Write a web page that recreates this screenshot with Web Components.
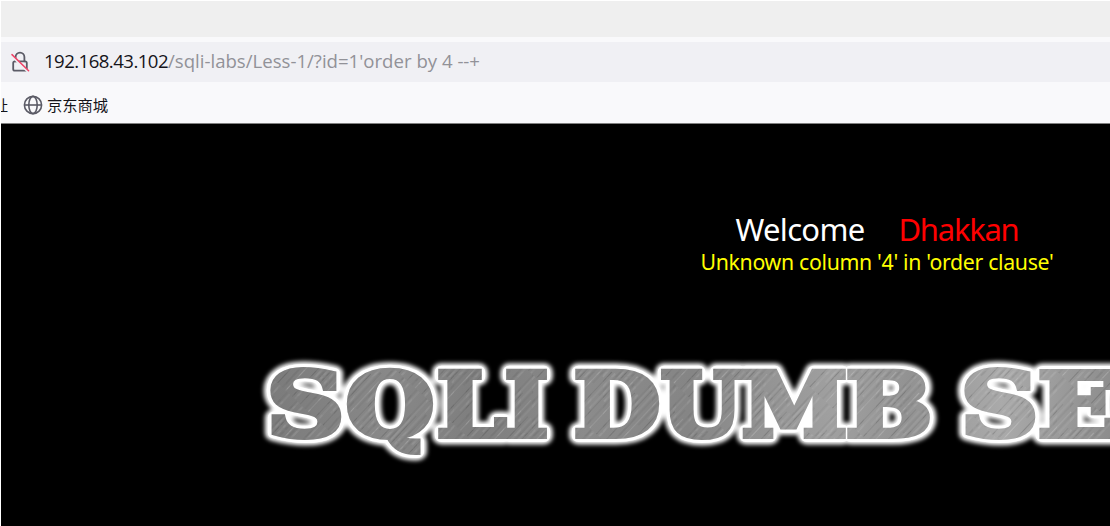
<!DOCTYPE html>
<html lang="en">
<head>
<meta charset="utf-8">
<title>SQLi Labs - Less 1</title>
<style>html,body{margin:0;height:100%;overflow:hidden;background:#fff}</style>
</head>
<body>
<browser-window></browser-window>
<script>
const define = (name, html, ready) => {
  const t = document.createElement('template');
  t.innerHTML = html;
  customElements.define(name, class extends HTMLElement {
    constructor() {
      super();
      this.attachShadow({mode: 'open'}).append(t.content.cloneNode(true));
    }
    connectedCallback() { if (ready) ready(this); }
  });
};

// Tracks its text so that the run fills the requested width.
define('fit-text', `<style>:host{display:inline-block;white-space:pre;flex:none}span{display:inline-block}</style><span><slot></slot></span>`, el => {
  const want = +el.getAttribute('width');
  const span = el.shadowRoot.querySelector('span');
  span.style.letterSpacing = '0px';
  const w = span.getBoundingClientRect().width;
  span.style.letterSpacing = (want - w) / el.textContent.length + 'px';
  el.style.width = want + 'px';
});

define('lock-icon', `<style>:host{display:block;width:20px;height:22px}svg{display:block}</style>
<svg width="20" height="22" viewBox="0 0 20 22" fill="none" stroke-linecap="round">
<rect x="3.2" y="10.3" width="13.6" height="9.4" rx="1.8" stroke="#5b5b66" stroke-width="1.8"/>
<path d="M5.6 10.3V6a4.4 4.4 0 0 1 8.8 0v4.3" stroke="#5b5b66" stroke-width="1.8"/>
<path d="M2 5.2 17.2 20" stroke="#f0f0f4" stroke-width="2.4"/>
<path d="M2 3.6 18.6 19.8" stroke="#f04468" stroke-width="1.5"/></svg>`);

define('globe-icon', `<style>:host{display:block;width:20px;height:20px}svg{display:block}</style>
<svg width="20" height="20" viewBox="0 0 20 20" fill="none" stroke="#5b5b66" stroke-width="1.6">
<circle cx="10" cy="10" r="8.6"/><ellipse cx="10" cy="10" rx="4.2" ry="8.6"/><path d="M1.4 10h17.2"/></svg>`);

define('address-bar', `<style>
:host{display:flex;align-items:center;height:40px;background:#f0f0f4;padding:0 0 0 9px;box-sizing:border-box;
font:18.6px/26px "Open Sans","Noto Sans",sans-serif;color:#15141a}
lock-icon{margin-right:14px}fit-text{margin-bottom:2px}.path{color:#929298}</style>
<lock-icon></lock-icon><fit-text width="124">192.168.43.102</fit-text><fit-text class="path" width="312">/sqli-labs/Less-1/?id=1'order by 4 --+</fit-text>`);

define('bookmark-bar', `<style>
:host{display:flex;align-items:center;height:40px;box-sizing:border-box;
font:15.3px/22px "Noto Sans CJK SC",sans-serif;color:#15141a}
.cut{width:7px;overflow:hidden;display:flex;justify-content:flex-end;margin-right:15px}
globe-icon{margin:6px 4px 0 0}fit-text,.cut{margin-top:3px}</style>
<span class="cut">址</span><globe-icon></globe-icon><fit-text width="61">京东商城</fit-text>`);

define('browser-chrome', `<style>
:host{display:block;height:123px;box-sizing:border-box;background:#f9f9fb;border-bottom:1px solid #808080}
.tabs{height:36px;background:#efefef;margin-bottom:5px}</style>
<div class="tabs"></div><address-bar></address-bar><bookmark-bar></bookmark-bar>`);

define('welcome-message', `<style>
:host{display:flex;flex-direction:column;align-items:center;width:354px;margin-left:699px;
font:21.3px/29px "Noto Sans","Open Sans",sans-serif;color:#ff0}
.row{display:flex;gap:34px;font:31px/40px "Noto Sans","Open Sans",sans-serif;color:#fff;height:38px}
.name{color:#f00}</style>
<div class="row"><fit-text width="129">Welcome</fit-text><fit-text class="name" width="120">Dhakkan</fit-text></div>
<fit-text width="353">Unknown column '4' in 'order clause'</fit-text>`);

define('metal-title', `<style>
:host{display:block;height:140px}svg{display:block;overflow:hidden}
text{font:bold 87.5px "DejaVu Serif",serif}</style>
<svg width="1109" height="140" viewBox="1 336 1109 140" stroke-linejoin="miter">
<defs>
<linearGradient id="metal" gradientUnits="userSpaceOnUse" x1="270" y1="365" x2="1110" y2="420">
<stop offset="0" stop-color="#7b7b7b"/><stop offset=".14" stop-color="#888"/><stop offset=".25" stop-color="#7e7e7e"/><stop offset=".38" stop-color="#8b8b8b"/><stop offset=".5" stop-color="#858585"/><stop offset=".67" stop-color="#a0a0a0"/><stop offset=".76" stop-color="#929292"/><stop offset=".87" stop-color="#aaa"/><stop offset="1" stop-color="#8d8d8d"/></linearGradient>
<pattern id="brush" width="31" height="90" patternUnits="userSpaceOnUse" patternTransform="rotate(43)">
<g stroke="#fff" stroke-opacity=".1"><path d="M2 0V61M9.5 20V90M15 0V44M22 33V90M27 0V76"/></g>
<g stroke="#222" stroke-opacity=".1"><path d="M5 12V90M12 0V55M18.5 34V90M25 0V60M29.5 20V90"/></g></pattern>
<filter id="soft" x="-5%" y="-25%" width="110%" height="150%"><feGaussianBlur stdDeviation="2.2"/></filter>
<filter id="edge" x="-5%" y="-25%" width="110%" height="150%"><feGaussianBlur stdDeviation=".7"/></filter>
</defs>
<g fill="#fff" stroke="#fff" stroke-linejoin="round" stroke-width="17" filter="url(#soft)"><use href="#word"/></g>
<g fill="#fff" stroke="#fff" stroke-linejoin="round" stroke-width="12" filter="url(#edge)"><use href="#word"/></g>
<g fill="url(#metal)" stroke="url(#metal)" stroke-width="6"><text id="word" y="435"><tspan x="267" textLength="77" lengthAdjust="spacingAndGlyphs">S</tspan><tspan x="346" textLength="88" lengthAdjust="spacingAndGlyphs">Q</tspan><tspan x="437" textLength="69" lengthAdjust="spacingAndGlyphs">L</tspan><tspan x="505" textLength="43" lengthAdjust="spacingAndGlyphs">I</tspan><tspan x="548"> </tspan><tspan x="574" textLength="86" lengthAdjust="spacingAndGlyphs">D</tspan><tspan x="661" textLength="81" lengthAdjust="spacingAndGlyphs">U</tspan><tspan x="742" textLength="105" lengthAdjust="spacingAndGlyphs">M</tspan><tspan x="846" textLength="86" lengthAdjust="spacingAndGlyphs">B</tspan><tspan x="932"> </tspan><tspan x="961" textLength="77" lengthAdjust="spacingAndGlyphs">S</tspan><tspan x="1038" textLength="83" lengthAdjust="spacingAndGlyphs">E</tspan></text></g>
<g fill="url(#brush)" stroke="url(#brush)" stroke-width="6"><use href="#word"/></g>
</svg>`);

define('lab-page', `<style>
:host{display:block;flex:1;background:#000;padding-top:85px;overflow:hidden}
metal-title{margin-top:61px}</style>
<welcome-message></welcome-message><metal-title></metal-title>`);

define('browser-window', `<style>
:host{display:flex;flex-direction:column;width:1110px;height:526px;box-sizing:border-box;padding:1px 0 0 1px;overflow:hidden}</style>
<browser-chrome></browser-chrome><lab-page></lab-page>`);
</script>
</body>
</html>
